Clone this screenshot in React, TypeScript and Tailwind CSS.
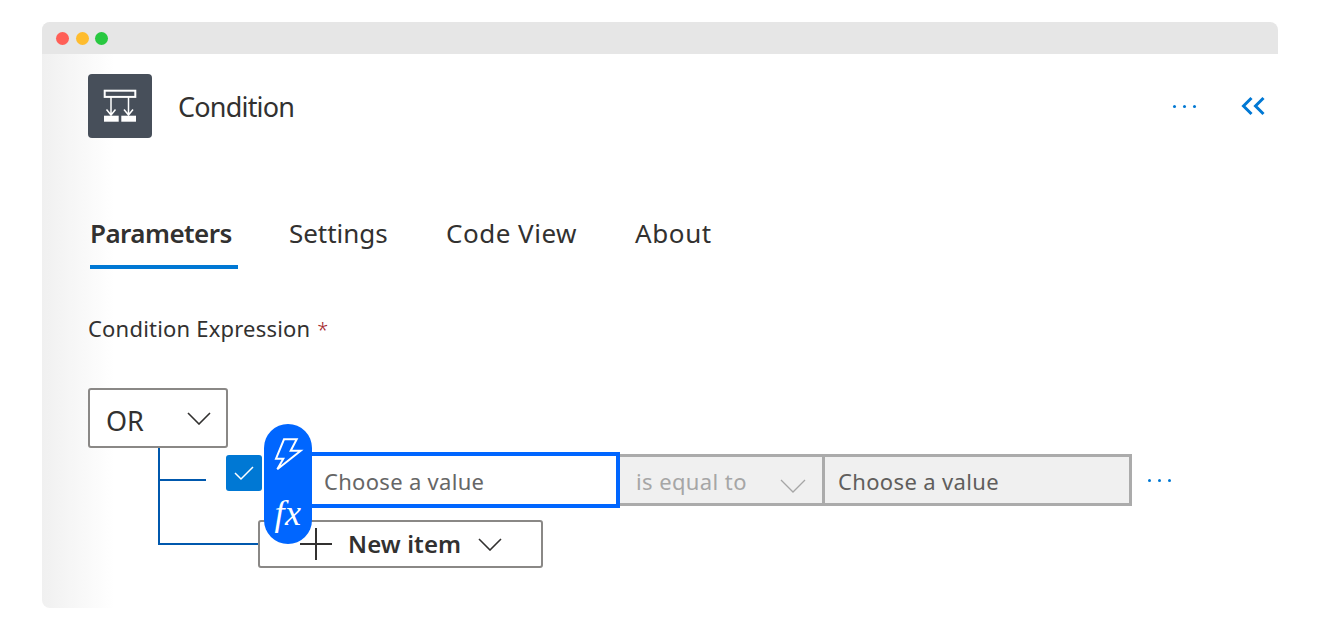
import React from "react";

const Chevron = ({ w, h, color, sw = 1.6 }: { w: number; h: number; color: string; sw?: number }) => (
  <svg width={w} height={h} viewBox={`0 0 ${w} ${h}`} fill="none" stroke={color} strokeWidth={sw}>
    <path d={`M1 1 L${w / 2} ${h - 1} L${w - 1} 1`} />
  </svg>
);

const Dots = () => (
  <div className="flex gap-[7px]">
    <span className="w-[3px] h-[3px] rounded-full bg-[#0078d4]" />
    <span className="w-[3px] h-[3px] rounded-full bg-[#0078d4]" />
    <span className="w-[3px] h-[3px] rounded-full bg-[#0078d4]" />
  </div>
);

export default function App() {
  return (
    <div className="w-[1320px] h-[630px] bg-white pt-[22px] pl-[42px] text-[#323130] font-['Noto_Sans',sans-serif] overflow-hidden">
      <div className="w-[1236px] h-[586px] rounded-lg overflow-hidden flex flex-col bg-[linear-gradient(90deg,#f0f0f0,#ffffff_72px)]">
        <div className="h-8 shrink-0 bg-[#e6e6e6] flex items-center pl-[14px] gap-[6.5px]">
          <span className="w-[13px] h-[13px] rounded-full bg-[#ff5f57]" />
          <span className="w-[13px] h-[13px] rounded-full bg-[#febc2e]" />
          <span className="w-[13px] h-[13px] rounded-full bg-[#28c840]" />
        </div>

        <div className="flex items-center pl-[46px] pr-[11px] mt-5 h-16 shrink-0">
          <div className="w-16 h-16 rounded bg-[#474f5a] shrink-0">
            <svg width="64" height="64" viewBox="0 0 64 64" fill="none" stroke="#fff" strokeWidth="1.5">
              <rect x="16.7" y="16.7" width="30.6" height="6.2" strokeWidth="2" />
              <path d="M23 23 V41 M18.5 35.5 L23 41 L27.5 35.5 M40.5 23 V41 M36 35.5 L40.5 41 L45 35.5" />
              <rect x="16" y="41.7" width="14.7" height="6" fill="#fff" stroke="none" />
              <rect x="33.3" y="41.7" width="14.7" height="6" fill="#fff" stroke="none" />
            </svg>
          </div>
          <span className="ml-[26px] text-[27px] leading-none tracking-[-0.8px]">Condition</span>
          <div className="ml-auto mr-[45px]">
            <Dots />
          </div>
          <svg width="26" height="20" viewBox="0 0 26 20" fill="none" stroke="#0078d4" strokeWidth="3">
            <path d="M10.5 2 L2.5 10 L10.5 18 M22.5 2 L14.5 10 L22.5 18" />
          </svg>
        </div>

        <div className="flex pl-[48px] mt-[77px] h-[54px] shrink-0 text-[26px] leading-[36px]">
          <div className="w-[148px] h-full border-b-4 border-[#0078d4] font-semibold tracking-[-0.55px]">Parameters</div>
          <div className="ml-[51px] w-[99px] tracking-[-0.05px]">Settings</div>
          <div className="ml-[58px] w-[131px] tracking-[0.5px]">Code View</div>
          <div className="ml-[58px] tracking-[0.6px]">About</div>
        </div>

        <div className="ml-[46px] mt-[43px] h-[32px] text-[22px] leading-[32px] shrink-0 tracking-[0.2px]">
          Condition Expression <span className="ml-[1px] text-[20px] font-light text-[#a4262c]">*</span>
        </div>

        <div className="ml-[46px] mt-[44px] w-[140px] h-[60px] shrink-0 border-2 border-[#8a8886] rounded-[3px] flex items-center pl-[16px] pr-[15px] justify-between bg-white">
          <span className="text-[27px] leading-none mt-1">OR</span>
          <Chevron w={24} h={13} color="#323130" />
        </div>

        <div className="ml-[116px] flex flex-col">
          <div className="relative flex h-[72px]">
            <div className="w-[48px] border-l-2 border-[#0058ad]">
              <div className="h-[33px] border-b-2 border-[#0058ad]" />
            </div>
            <div className="ml-5 mt-[7px] w-9 h-9 rounded-[3px] bg-[#0078d4] flex items-center justify-center">
              <svg width="20" height="16" viewBox="0 0 20 16" fill="none" stroke="#fff" strokeWidth="1.5">
                <path d="M1 8 L7 14 L19 2" />
              </svg>
            </div>
            <div className="ml-[2px] mt-1 w-[356px] h-14 border-4 border-[#0066ff] bg-white pl-[56px] pt-[2px] flex items-center text-[22px] tracking-[0.3px] text-[#666]">
              Choose a value
            </div>
            <div className="mt-[6px] w-[205px] h-[52px] border-y-[3px] border-r-[3px] border-[#ababab] bg-[#f0f0f0] pl-[16px] pr-[16px] pt-[2px] flex items-center justify-between text-[22px] tracking-[0.4px] text-[#a6a6a6]">
              <span>is equal to</span>
              <span className="mt-[10px]">
                <Chevron w={26} h={14} color="#a6a6a6" sw={1.3} />
              </span>
            </div>
            <div className="mt-[6px] w-[307px] h-[52px] border-y-[3px] border-r-[3px] border-[#ababab] bg-[#f0f0f0] pl-[13px] pt-[2px] flex items-center text-[22px] tracking-[0.35px] text-[#605e5c]">
              Choose a value
            </div>
            <div className="ml-[16px] mt-[31px]">
              <Dots />
            </div>
            <div className="absolute left-[106px] -top-6 w-12 h-[120px] rounded-full bg-[#0066ff] z-10 flex flex-col items-center">
              <svg width="48" height="60" viewBox="0 0 48 60" fill="none" stroke="#fff" strokeWidth="2" strokeLinejoin="miter">
                <path d="M20 15.3 H32.7 L26.7 26.7 H36.7 L13.3 45.3 L19.3 34.7 H12 Z" />
              </svg>
              <span className="font-['Liberation_Serif',serif] italic text-[36px] leading-none text-white mt-[11px] tracking-[0.5px]">fx</span>
            </div>
          </div>

          <div className="flex items-start">
            <div className="w-[100px] h-[25px] border-l-2 border-b-2 border-[#0058ad]" />
            <div className="relative w-[285px] h-12 border-2 border-[#8a8886] rounded-[3px] bg-white flex items-center pl-[88px]">
              <svg className="absolute left-[40px] top-[6px]" width="32" height="32" viewBox="0 0 32 32" stroke="#323130" strokeWidth="2">
                <path d="M0 16 H32 M16 0 V32" />
              </svg>
              <span className="text-[24px] font-semibold leading-none tracking-[0.1px]">New item</span>
              <span className="ml-[17px]">
                <Chevron w={24} h={13} color="#323130" />
              </span>
            </div>
          </div>
        </div>
      </div>
    </div>
  );
}
